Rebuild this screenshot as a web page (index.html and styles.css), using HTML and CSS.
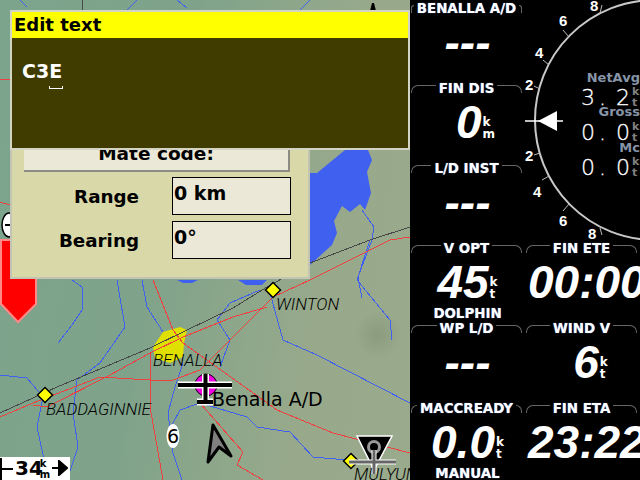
FILE: index.html
```html
<!DOCTYPE html>
<html>
  <head>
    <meta charset="UTF-8">
    <title>Edit text</title>
    <link rel="stylesheet" href="styles.css">
  </head>
  <body>
    <div class="screen">
      <!-- Moving map -->
      <div class="map">
        <svg class="map-art" width="410" height="480" viewBox="0 0 410 480">
          <g class="water">
            <polygon points="345,150 368,150 372,160 367,172 371,193 365,210 360,204 350,212 342,206 334,221 337,233 332,245 310,265 310,173 317,173"/>
            <polygon points="177,280 198,280 192,283 183,283"/>
            <polygon points="238,280 267,280 262,285 246,285"/>
          </g>
          <polygon class="town" points="153,347 163,332 180,327 187,330 184,343 183,357 170,363 155,358"/>
          <g class="rivers">
            <polyline points="20,0 27,7"/>
            <polyline points="137,0 127,10"/>
            <polyline points="177,0 187,8"/>
            <polyline points="310,0 300,10"/>
            <polyline points="72,280 82,287 82,310 72,325 58,343"/>
            <polyline points="117,280 125,327 100,363 77,380 73,413 78,447 67,480"/>
            <polyline points="0,375 27,378 43,397 37,427 43,455 50,480"/>
            <polyline points="142,280 147,307 163,332"/>
            <polyline points="270,293 283,340 317,355 410,403"/>
            <polyline points="260,290 230,303 217,320 230,340 220,367"/>
            <polyline points="183,363 175,387 168,413 173,453 182,480"/>
            <polyline points="172,425 180,410 200,403 247,417 257,427 290,432 313,457 347,460"/>
            <polyline points="370,240 357,280 390,320 392,340"/>
            <polyline points="362,210 374,227 372,240 358,277 362,298"/>
          </g>
          <g class="roads">
            <polyline points="0,79 10,79"/>
            <polyline points="0,202 10,205"/>
            <polyline points="0,417 33,403 100,377 150,380 173,380 200,370 273,297 310,280 390,240 410,237"/>
            <polyline points="33,405 47,407 110,375 150,353 183,337 233,317 267,307"/>
            <polyline points="150,353 150,407 163,480"/>
            <polyline points="153,280 173,330 183,343 277,410 333,433 410,453"/>
            <polyline points="200,403 243,452 237,465 263,480"/>
          </g>
          <polyline class="rail" points="0,413 57,387 150,348 187,330 233,308 267,287 310,263 370,240 410,227"/>
          <polyline class="rail" points="82,0 82,10"/>
          <path class="spot" d="M370 11 L372 3 L374 3 L376 11 Z"/>

          <path class="final-arrow" d="M1 240 H36 V304 L18 322 L1 304 Z"/>
          <ellipse class="side-marker" cx="9" cy="225" rx="7" ry="12"/>
          <rect class="side-dash" x="5" y="224" width="5" height="2"/>

          <polygon class="waypoint" points="273,282.500 280.500,290 273,297.500 265.500,290"/>
          <polygon class="waypoint" points="45,387.500 52.500,395 45,402.500 37.500,395"/>
          <polygon class="waypoint" points="351,453.500 358.500,461 351,468.500 343.500,461"/>

          <!-- Target airfield -->
          <circle class="target" cx="206" cy="385" r="11"/>
          <path class="plane-halo" d="M178 385 H232 M205.500 374 V402 M197 402 H213"/>
          <path class="plane-body" d="M178 385 H232 M205.500 374 V402 M197 402 H213"/>

          <!-- Second airfield with its triangle -->
          <polygon class="arrival" points="357,436 392,436 374,470"/>
          <circle class="arrival-ring" cx="374" cy="447" r="5.500"/>
          <path class="small-halo" d="M349 462 H396 M374 450 V474"/>
          <path class="small-body" d="M349 462 H396 M374 450 V474"/>

          <ellipse class="alt-marker" cx="173" cy="436" rx="6.500" ry="12"/>
          <polygon class="glider" points="213,425 231,456 219,447 208,462"/>
        </svg>

        <span class="map-label label-winton">WINTON</span>
        <span class="map-label label-benalla">BENALLA</span>
        <span class="map-label label-badd">BADDAGINNIE</span>
        <span class="map-label label-mul">MULYUN</span>
        <span class="field-label">Benalla A/D</span>
        <span class="alt-label">6</span>

        <div class="scale">
          <span class="scale-tick"></span>
          <span class="scale-num">34</span>
          <span class="scale-unit">k<br>m</span>
          <svg class="scale-arrow" width="16" height="16" viewBox="0 0 16 16"><path d="M0 8 H10 M7 1 L15 8 L7 15 Z"/></svg>
        </div>

        <!-- Dialog behind the keyboard window -->
        <div class="dialog">
          <div class="dialog-btn">Mate code:</div>
          <div class="dialog-row">
            <span class="dialog-key">Range</span>
            <span class="dialog-val">0 km</span>
          </div>
          <div class="dialog-row">
            <span class="dialog-key">Bearing</span>
            <span class="dialog-val">0°</span>
          </div>
        </div>

        <div class="edit">
          <div class="edit-title">Edit text</div>
          <div class="edit-body">
            <span class="edit-text">C3E</span>
            <span class="edit-cursor"></span>
          </div>
        </div>
      </div>

      <!-- InfoBoxes -->
      <div class="panel">
        <div class="box">
          <div class="box-title">BENALLA A/D</div>
          <div class="box-value"><span class="num">---</span></div>
        </div>

        <div class="vario">
          <svg width="115" height="240" viewBox="525 0 115 240">
            <circle class="vario-dial" cx="655" cy="120" r="120"/>
            <path class="vario-ticks" d="M569 37 L563 30 M549 65 L543 60 M540 89 L534 86 M540 153 L534 155 M549 176 L542 180 M569 204 L563 211 M600 13 L602 5 M600 228 L602 235"/>
            <g class="vario-scale">
              <text x="590" y="11">8</text>
              <text x="559" y="26">6</text>
              <text x="535" y="58">4</text>
              <text x="525" y="90">2</text>
              <text x="525" y="161">2</text>
              <text x="533" y="197">4</text>
              <text x="559" y="226">6</text>
              <text x="588" y="239">8</text>
            </g>
            <path class="vario-needle" d="M525 121 H563"/>
            <polygon class="vario-pointer" points="538,121 557,111 557,131"/>
            <g class="vario-head">
              <text x="640" y="82">NetAvg</text>
              <text x="640" y="116">Gross</text>
              <text x="640" y="152">Mc</text>
            </g>
            <g class="vario-num">
              <text x="581" y="105">3</text><text x="599" y="105">.</text><text x="616" y="105">2</text>
              <text x="581" y="140">0</text><text x="599" y="140">.</text><text x="616" y="140">0</text>
              <text x="581" y="175">0</text><text x="599" y="175">.</text><text x="616" y="175">0</text>
            </g>
            <g class="vario-unit">
              <text x="632" y="95">k</text><text x="632" y="106">t</text>
              <text x="632" y="130">k</text><text x="632" y="141">t</text>
              <text x="632" y="165">k</text><text x="632" y="176">t</text>
            </g>
          </svg>
        </div>

        <div class="box">
          <div class="box-title">FIN DIS</div>
          <div class="box-value narrow"><span class="num">0</span><span class="unit">k<br>m</span></div>
        </div>

        <div class="box">
          <div class="box-title">L/D INST</div>
          <div class="box-value"><span class="num">---</span></div>
        </div>

        <div class="box">
          <div class="box-title">V OPT</div>
          <div class="box-value"><span class="num">45</span><span class="unit">k<br>t</span></div>
          <div class="box-comment">DOLPHIN</div>
        </div>
        <div class="box">
          <div class="box-title">FIN ETE</div>
          <div class="box-value wide"><span class="num">00:00</span></div>
        </div>

        <div class="box">
          <div class="box-title">WP L/D</div>
          <div class="box-value"><span class="num">---</span></div>
        </div>
        <div class="box">
          <div class="box-title">WIND V</div>
          <div class="box-value narrow"><span class="num">6</span><span class="unit">k<br>t</span></div>
        </div>

        <div class="box">
          <div class="box-title">MACCREADY</div>
          <div class="box-value"><span class="num">0.0</span><span class="unit">k<br>t</span></div>
          <div class="box-comment">MANUAL</div>
        </div>
        <div class="box">
          <div class="box-title">FIN ETA</div>
          <div class="box-value wide"><span class="num">23:22</span></div>
        </div>
      </div>
    </div>
  </body>
</html>
```

FILE: styles.css
```css
body {
  margin: 0;
  background-color: #000;
  font-family: 'DejaVu Sans', sans-serif;
}

.screen {
  display: flex;
  width: 640px;
  height: 480px;
  overflow: hidden;
}

/* Map */
.map {
  position: relative;
  flex: 0 0 410px;
  height: 480px;
  overflow: hidden;
  background:
    radial-gradient(circle at 378px 335px, #8b9c7e 0, rgba(139, 156, 126, 0) 24px),
    linear-gradient(100deg, #7ca48c 0%, #7fa38a 40%, #98a98b 75%, #9aaa8c 100%);
}

.map-art {
  position: absolute;
  left: 0;
  top: 0;
}

.water polygon {
  fill: #4060f0;
}

.town {
  fill: #e0e000;
}

.rivers polyline {
  fill: none;
  stroke: #4060f0;
  stroke-width: 1;
  shape-rendering: crispEdges;
}

.roads polyline {
  fill: none;
  stroke: #f04040;
  stroke-width: 1;
  shape-rendering: crispEdges;
}

.rail {
  fill: none;
  stroke: #484848;
  stroke-width: 1;
  shape-rendering: crispEdges;
}

.spot {
  fill: #000;
}

.final-arrow {
  fill: #f00;
  stroke: #ff8888;
  stroke-width: 2;
}

.side-marker {
  fill: #fff;
  stroke: #000;
  stroke-width: 1.500;
}

.side-dash {
  fill: #000;
}

.waypoint {
  fill: #ffff00;
  stroke: #000;
  stroke-width: 1.500;
}

.target {
  fill: #f000e0;
  stroke: #000;
  stroke-width: 1;
}

.plane-halo {
  fill: none;
  stroke: #fff;
  stroke-width: 7;
}

.plane-body {
  fill: none;
  stroke: #000;
  stroke-width: 4;
}

.arrival {
  fill: #000;
  stroke: #fff;
  stroke-width: 1.500;
}

.arrival-ring {
  fill: none;
  stroke: #999;
  stroke-width: 3;
}

.small-halo {
  fill: none;
  stroke: #fff;
  stroke-width: 5;
}

.small-body {
  fill: none;
  stroke: #666;
  stroke-width: 3;
}

.alt-marker {
  fill: #fff;
}

.glider {
  fill: #808080;
  stroke: #000;
  stroke-width: 3;
  stroke-linejoin: round;
}

.map-label {
  position: absolute;
  font-family: Roboto, sans-serif;
  font-size: 17px;
  font-style: italic;
  font-weight: 300;
  line-height: 16px;
  color: #000;
  white-space: nowrap;
}

.label-winton {
  left: 276px;
  top: 296px;
}

.label-benalla {
  left: 153px;
  top: 352px;
}

.label-badd {
  left: 46px;
  top: 401px;
}

.label-mul {
  left: 354px;
  top: 466px;
}

.field-label {
  position: absolute;
  left: 212px;
  top: 387px;
  font-size: 19px;
  line-height: 24px;
  color: #000;
  white-space: nowrap;
}

.alt-label {
  position: absolute;
  left: 167px;
  top: 425px;
  font-size: 19px;
  line-height: 22px;
  color: #000;
}

/* Scale bar */
.scale {
  position: absolute;
  left: 0;
  bottom: 0;
  display: flex;
  align-items: flex-end;
  width: 70px;
  height: 23px;
  background-color: #fff;
  color: #000;
}

.scale-tick {
  position: relative;
  width: 13px;
  height: 2px;
  margin: 0 2px 10px 0;
  background-color: #000;
}

.scale-tick::before {
  content: "";
  position: absolute;
  left: 0;
  top: -10px;
  width: 2px;
  height: 22px;
  background-color: #000;
}

.scale-num {
  margin-bottom: 1px;
  font-size: 20px;
  font-weight: bold;
  line-height: 22px;
}

.scale-unit {
  width: 11px;
  margin-left: -3px;
  font-size: 10px;
  font-weight: bold;
  line-height: 11px;
}

.scale-arrow {
  margin: 0 0 4px 1px;
}

.scale-arrow path {
  fill: #000;
  stroke: #000;
  stroke-width: 2;
}

/* Dialog */
.dialog {
  position: absolute;
  left: 10px;
  top: 120px;
  display: flex;
  flex-direction: column;
  box-sizing: border-box;
  width: 300px;
  height: 159px;
  padding-top: 12px;
  background-color: #d8d8a8;
  border: 2px solid #c4c4b4;
}

.dialog-btn {
  box-sizing: border-box;
  width: 266px;
  height: 38px;
  margin-left: 12px;
  background-color: #ebe8d8;
  border-bottom: 2px solid #8c8c84;
  border-right: 2px solid #8c8c84;
  font-size: 18.500px;
  font-weight: bold;
  line-height: 40px;
  text-align: center;
  color: #000;
}

.dialog-row {
  display: flex;
  align-items: center;
  height: 38px;
  margin-top: 5px;
}

.dialog-row + .dialog-row {
  margin-top: 6px;
}

.dialog-key {
  width: 127px;
  font-size: 18.300px;
  font-weight: bold;
  text-align: right;
  color: #000;
}

.dialog-val {
  box-sizing: border-box;
  width: 119px;
  height: 38px;
  margin-left: 33px;
  padding: 4px 0 0 1px;
  background-color: #ebe8d8;
  border: 1px solid #000;
  font-size: 19px;
  font-weight: bold;
  line-height: 22px;
  color: #000;
}

/* Keyboard window */
.edit {
  position: absolute;
  left: 10px;
  top: 10px;
  width: 396px;
  height: 136px;
  display: flex;
  flex-direction: column;
  border: 2px solid #d4d4c4;
}

.edit-title {
  height: 26px;
  padding-left: 2px;
  background-color: #ffff00;
  font-size: 18px;
  font-weight: bold;
  line-height: 26px;
  color: #000;
}

.edit-body {
  position: relative;
  flex: 1;
  background-color: #403c00;
}

.edit-text {
  position: absolute;
  left: 10px;
  top: 21px;
  font-size: 19px;
  font-weight: bold;
  line-height: 24px;
  color: #fff;
}

.edit-cursor {
  position: absolute;
  left: 37px;
  top: 48px;
  width: 12px;
  height: 2px;
  border: 1px solid #fff;
  border-top: none;
}

/* InfoBoxes */
.panel {
  display: grid;
  flex: 0 0 230px;
  grid-template-columns: 115px 115px;
  grid-template-rows: repeat(6, 80px);
  background-color: #000;
}

.box {
  display: flex;
  flex-direction: column;
  color: #fff;
}

.box-title {
  display: flex;
  align-items: flex-start;
  justify-content: center;
  gap: 3px;
  height: 17px;
  padding: 0 3px 0 1px;
  font-size: 13.400px;
  font-weight: bold;
  line-height: 17px;
  white-space: nowrap;
  color: #fff;
  text-shadow: 0 0 1px #8ab4ff;
}

.box-title::before,
.box-title::after {
  content: "";
  flex: 1;
  min-width: 2px;
  height: 7px;
  margin-top: 5px;
  border-top: 1px solid #666;
}

.box-title::before {
  border-left: 1px solid #666;
  border-top-left-radius: 7px;
}

.box-title::after {
  border-right: 1px solid #666;
  border-top-right-radius: 7px;
}

.box-value {
  display: flex;
  flex: 0 0 50px;
  align-items: center;
  justify-content: center;
}

.box-value.narrow {
  padding-left: 16px;
}

.box-value.wide {
  justify-content: flex-start;
  padding-left: 3px;
}

.num {
  font-family: 'Liberation Sans', sans-serif;
  font-size: 46px;
  font-style: italic;
  font-weight: bold;
  line-height: 46px;
}

.unit {
  margin: 12px 0 0 1px;
  font-size: 12px;
  font-weight: bold;
  line-height: 12px;
}

.box-comment {
  height: 15px;
  margin-top: -2px;
  font-size: 13.400px;
  font-weight: bold;
  line-height: 18px;
  text-align: center;
  text-shadow: 0 0 1px #8ab4ff;
}

/* Vario gauge */
.vario {
  grid-column: 2;
  grid-row: 1 / span 3;
  overflow: hidden;
}

.vario-dial {
  fill: none;
  stroke: #c8c8c8;
  stroke-width: 2;
}

.vario-ticks {
  fill: none;
  stroke: #bbb;
  stroke-width: 1;
}

.vario-scale text {
  font-family: 'Liberation Sans', sans-serif;
  font-size: 15px;
  font-weight: bold;
  fill: #fff;
}

.vario-needle {
  stroke: #fff;
  stroke-width: 1.500;
}

.vario-pointer {
  fill: #fff;
}

.vario-head text {
  font-size: 13px;
  font-weight: bold;
  fill: #8694a8;
  text-anchor: end;
}

.vario-num text {
  font-size: 22px;
  font-weight: 200;
  fill: #fff;
  stroke: #fff;
  stroke-width: 0.300;
}

.vario-unit text {
  font-size: 11px;
  font-weight: bold;
  fill: #808080;
}
```
